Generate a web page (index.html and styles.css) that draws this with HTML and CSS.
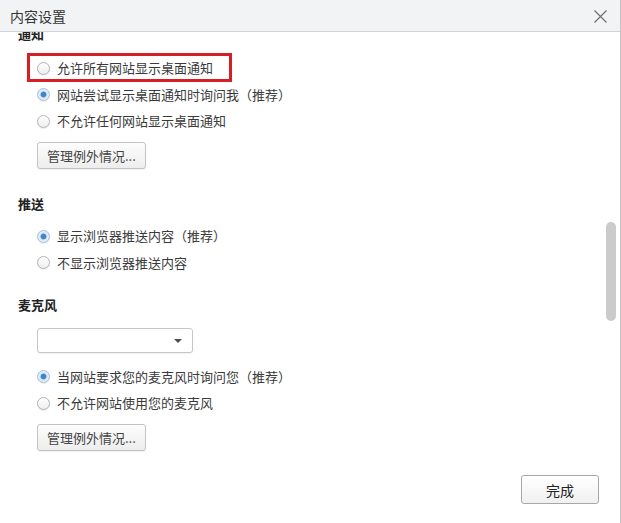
FILE: index.html
```html
<!DOCTYPE html>
<html lang="zh-CN">
<head>
<meta charset="utf-8">
<title>内容设置</title>
<link rel="stylesheet" href="styles.css">
</head>
<body>
<div class="dialog">
  <div class="titlebar">
    <span class="title">内容设置</span>
    <svg class="close" width="13" height="13" viewBox="0 0 13 13"><path d="M0.5 0.5L12.5 12.5M12.5 0.5L0.5 12.5" stroke="#6b6b6b" stroke-width="1.1" fill="none"/></svg>
  </div>
  <div class="body">
    <div class="content">
      <div class="section first">
        <h3 class="heading">通知</h3>
        <div class="options">
          <label class="opt highlight"><span class="radio"></span><span>允许所有网站显示桌面通知</span></label>
          <label class="opt"><span class="radio checked"></span><span>网站尝试显示桌面通知时询问我（推荐）</span></label>
          <label class="opt"><span class="radio"></span><span>不允许任何网站显示桌面通知</span></label>
        </div>
        <button class="btn">管理例外情况...</button>
      </div>
      <div class="section">
        <h3 class="heading">推送</h3>
        <div class="options">
          <label class="opt"><span class="radio checked"></span><span>显示浏览器推送内容（推荐）</span></label>
          <label class="opt"><span class="radio"></span><span>不显示浏览器推送内容</span></label>
        </div>
      </div>
      <div class="section">
        <h3 class="heading">麦克风</h3>
        <div class="select"><span class="arrow"></span></div>
        <div class="options after-select">
          <label class="opt"><span class="radio checked"></span><span>当网站要求您的麦克风时询问您（推荐）</span></label>
          <label class="opt"><span class="radio"></span><span>不允许网站使用您的麦克风</span></label>
        </div>
        <button class="btn">管理例外情况...</button>
      </div>
    </div>
    <div class="scrollbar"></div>
  </div>
  <div class="footer">
    <button class="done">完成</button>
  </div>
</div>
</body>
</html>
```
FILE: styles.css
```css
*, *::before, *::after { box-sizing: border-box; }
html, body { margin: 0; padding: 0; }
body {
  font-family: "Noto Sans CJK SC", "Microsoft YaHei", sans-serif;
  font-size: 13px;
  color: #3a3a3a;
  background: #fff;
}
.dialog {
  width: 621px;
  height: 523px;
  display: flex;
  flex-direction: column;
  border-right: 1px solid #c4c4c4;
  overflow: hidden;
}
.titlebar {
  flex: none;
  height: 32px;
  background: #f2f3f5;
  border-bottom: 1px solid #d3d4d6;
  display: flex;
  align-items: center;
  justify-content: space-between;
  padding: 0 13px 0 10px;
}
.title { font-size: 14px; color: #333; line-height: 20px; }
.close { display: block; margin-top: 1px; }
.body {
  flex: 1;
  position: relative;
  overflow: hidden;
}
.content {
  display: flex;
  flex-direction: column;
  padding-left: 18px;
  margin-top: -8px;
}
.section {
  display: flex;
  flex-direction: column;
  align-items: flex-start;
}
.section + .section { margin-top: 18.5px; }
.heading {
  margin: 0;
  font-size: 13px;
  font-weight: bold;
  line-height: 20px;
  color: #222;
}
.options {
  align-self: stretch;
  padding-left: 19px;
  margin-top: 9px;
}
.first .options { margin-top: 11px; }
.options.after-select { margin-top: 10.5px; }
.opt {
  height: 26.5px;
  display: flex;
  align-items: center;
  gap: 7px;
  position: relative;
  line-height: 18px;
}
.highlight::before {
  content: "";
  position: absolute;
  left: -10px;
  top: -2px;
  width: 205px;
  height: 29px;
  border: 3.5px solid #d81e25;
}
.radio {
  flex: none;
  width: 13px;
  height: 13px;
  border-radius: 50%;
  border: 1px solid #b3b3b3;
  background: linear-gradient(#ffffff, #eeeeee);
  box-shadow: 0 1px 1px rgba(0,0,0,0.08);
}
.radio.checked {
  border-color: #a9bdd3;
  background: radial-gradient(circle, #3d86cf 0, #3d86cf 2.4px, #dbe8f6 3.4px, #eef4fb 100%);
}
.btn {
  display: block;
  margin: 7.5px 0 6.5px 19px;
  height: 27px;
  padding: 0 9px;
  font-family: inherit;
  font-size: 13px;
  color: #444;
  border: 1px solid #c3c3c3;
  border-radius: 3px;
  background: linear-gradient(#fdfdfd, #ededed);
  box-shadow: 0 1px 1px rgba(0,0,0,0.06);
}
.select {
  margin: 13.5px 0 0 19px;
  width: 156px;
  height: 25px;
  border: 1px solid #c6c6c6;
  border-radius: 3px;
  background: #fff;
  box-shadow: 0 1px 1px rgba(0,0,0,0.06);
  display: flex;
  align-items: center;
  justify-content: flex-end;
  padding-right: 10px;
}
.arrow {
  width: 0;
  height: 0;
  border-left: 4px solid transparent;
  border-right: 4px solid transparent;
  border-top: 4px solid #4d4d4d;
}
.scrollbar {
  position: absolute;
  left: 606px;
  top: 190px;
  width: 10px;
  height: 99px;
  border-radius: 5px;
  background: #cbcbcb;
}
.footer {
  flex: none;
  display: flex;
  justify-content: flex-end;
  padding: 0 21px 19px 0;
}
.done {
  width: 78px;
  height: 29px;
  font-family: inherit;
  font-size: 14px;
  color: #222;
  border: 1px solid #a8a8a8;
  border-radius: 3px;
  background: linear-gradient(#ffffff, #f0f0f0);
}
```
